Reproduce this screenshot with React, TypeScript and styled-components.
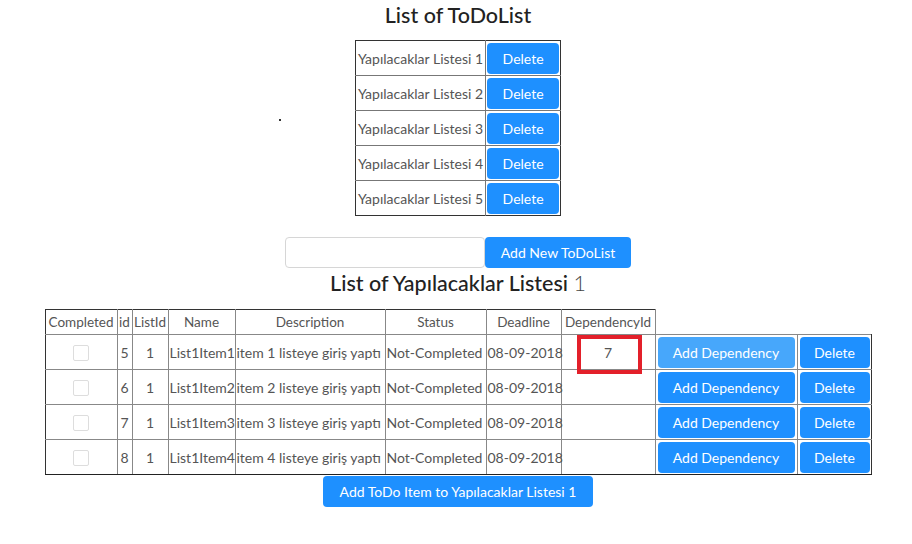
import React from "react";
import styled, { createGlobalStyle } from "styled-components";

const Global = createGlobalStyle`
  html, body { margin: 0; padding: 0; background: #fff; }
  body { font-family: "Segoe UI", Lato, "Open Sans", sans-serif; color: #212529; }
  * { box-sizing: border-box; }
`;

const Page = styled.div`
  width: 912px;
  display: flex;
  flex-direction: column;
  align-items: center;
  padding-left: 4px;
`;

const Title = styled.h2`
  margin: 0;
  height: 30px;
  line-height: 30px;
  font-size: 21.5px;
  font-weight: 500;
  color: #222;
  text-align: center;
  white-space: nowrap;
`;

const Top = styled.div`
  margin-top: 10px;
  width: 100%;
  display: grid;
  grid-template-columns: 1fr auto 1fr;
  align-items: center;
`;

const Dot = styled.span`
  justify-self: end;
  margin-right: 74px;
  width: 2px;
  height: 2px;
  background: #333;
  margin-top: -16px;
`;

const ListTable = styled.table`
  border-collapse: collapse;
  border: 1px solid #333;
`;

const ListRow = styled.tr`
  height: 35px;
  & + & td { border-top: 1px solid #777; }
`;

const ListName = styled.td`
  padding: 0 2px;
  font-size: 14px;
  color: #555;
  white-space: nowrap;
  border-right: 1px solid #777;
`;

const BtnCell = styled.td`
  padding: 1px;
`;

const Button = styled.button<{ $w?: number; $hover?: boolean }>`
  display: block;
  height: 31px;
  width: ${(p) => (p.$w ? `${p.$w}px` : "auto")};
  padding: 0 12px;
  border: none;
  border-radius: 4px;
  background: ${(p) => (p.$hover ? "#47a7fb" : "#1e90ff")};
  color: #fff;
  font-family: inherit;
  font-size: 14px;
  cursor: pointer;
`;

const AddRow = styled.div`
  margin-top: 21px;
  display: flex;
  align-items: center;
`;

const Input = styled.input`
  width: 200px;
  height: 31px;
  border: 1px solid #d6d6d6;
  border-radius: 4px;
  padding: 0 8px;
  font-family: inherit;
`;

const Light = styled.span`
  font-weight: 300;
  color: #444;
`;

const MainTable = styled.table`
  margin-top: 11px;
  border-collapse: collapse;
  table-layout: fixed;
  width: 826px;
  font-size: 14px;
  color: #555;
`;

const HeadRow = styled.tr`
  height: 25px;
`;

const Th = styled.th`
  font-weight: 400;
  font-size: 13.5px;
  padding: 0;
  border: 1px solid #888;
  border-top-color: #333;
  white-space: nowrap;
  overflow: hidden;
  text-align: center;
  &:first-child { border-left-color: #333; }
`;

const BodyRow = styled.tr`
  height: 35px;
  &:last-child td { border-bottom-color: #222; }
`;

const Td = styled.td<{ $align?: "left" | "center" }>`
  padding: 0 1px;
  border: 1px solid #888;
  white-space: nowrap;
  text-align: ${(p) => p.$align || "left"};
  &:first-child { border-left-color: #333; }
  &:last-child { border-right-color: #333; }
`;

const BtnTd = styled(Td)`
  padding: 1px 2px;
`;

const DepCell = styled(Td)`
  position: relative;
  text-align: center;
`;

const Mark = styled.span`
  position: absolute;
  left: 15px;
  top: 0px;
  width: 65px;
  height: 39px;
  border: 4px solid #e3202a;
`;

const Check = styled.span`
  display: inline-block;
  width: 16px;
  height: 16px;
  border: 1px solid #ddd;
  border-radius: 2px;
  background: #fff;
  vertical-align: middle;
`;

const BottomButton = styled(Button)`
  margin-top: 1px;
  padding: 0 17px;
`;

const cols = [72, 15, 36, 67, 150, 101, 75, 94, 142, 74];

const items = [5, 6, 7, 8].map((id, i) => ({
  id,
  listId: 1,
  name: `List1Item${i + 1}`,
  desc: `item ${i + 1} listeye giriş yaptı`,
  status: "Not-Completed",
  deadline: "08-09-2018",
  dep: i === 0 ? "7" : "",
}));

export default function App() {
  return (
    <Page>
      <Global />
      <Title>List of ToDoList</Title>
      <Top>
        <Dot />
        <ListTable>
          <tbody>
            {[1, 2, 3, 4, 5].map((n) => (
              <ListRow key={n}>
                <ListName>Yapılacaklar Listesi {n}</ListName>
                <BtnCell>
                  <Button $w={72}>Delete</Button>
                </BtnCell>
              </ListRow>
            ))}
          </tbody>
        </ListTable>
        <span />
      </Top>
      <AddRow>
        <Input />
        <Button $w={146}>Add New ToDoList</Button>
      </AddRow>
      <Title>
        List of Yapılacaklar Listesi <Light>1</Light>
      </Title>
      <MainTable>
        <colgroup>
          {cols.map((w, i) => (
            <col key={i} style={{ width: w }} />
          ))}
        </colgroup>
        <thead>
          <HeadRow>
            <Th>Completed</Th>
            <Th>id</Th>
            <Th>ListId</Th>
            <Th>Name</Th>
            <Th>Description</Th>
            <Th>Status</Th>
            <Th>Deadline</Th>
            <Th>DependencyId</Th>
          </HeadRow>
        </thead>
        <tbody>
          {items.map((it, i) => (
            <BodyRow key={it.id}>
              <Td $align="center">
                <Check />
              </Td>
              <Td $align="center">{it.id}</Td>
              <Td $align="center">{it.listId}</Td>
              <Td>{it.name}</Td>
              <Td>{it.desc}</Td>
              <Td>{it.status}</Td>
              <Td>{it.deadline}</Td>
              <DepCell>
                {it.dep}
                {i === 0 && <Mark />}
              </DepCell>
              <BtnTd>
                <Button $w={137} $hover={i === 0}>Add Dependency</Button>
              </BtnTd>
              <BtnTd>
                <Button $w={70}>Delete</Button>
              </BtnTd>
            </BodyRow>
          ))}
        </tbody>
      </MainTable>
      <BottomButton>Add ToDo Item to Yapılacaklar Listesi 1</BottomButton>
    </Page>
  );
}
